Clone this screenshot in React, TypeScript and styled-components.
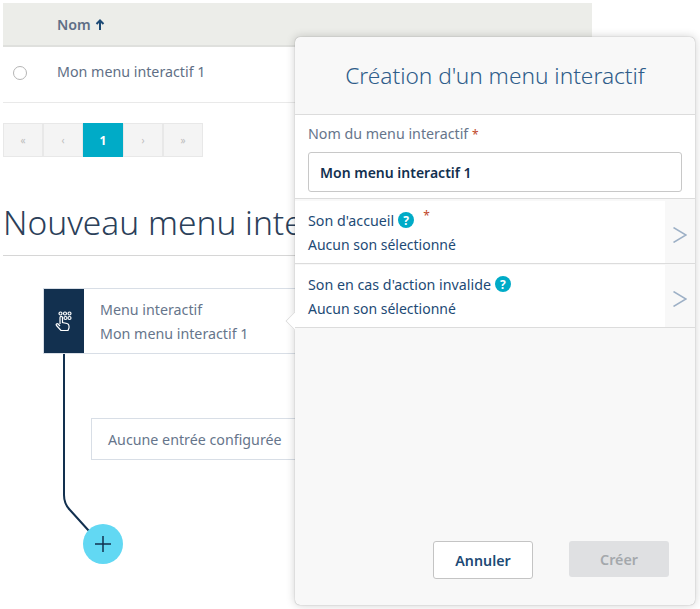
import React from "react";
import styled, { createGlobalStyle } from "styled-components";

const GlobalStyle = createGlobalStyle`
	html, body {
		margin: 0;
		padding: 0;
		background: #fff;
	}
	body {
		font-family: "Noto Sans", "Liberation Sans", sans-serif;
		font-size: 14.25px;
		color: #5f6f86;
	}
`;

const pages = [
	{ label: "«" },
	{ label: "‹" },
	{ label: "1", active: true },
	{ label: "›" },
	{ label: "»" },
];

const HandIcon = () => (
	<svg width="18" height="20" viewBox="0 0 18 20" fill="none" stroke="#fff" strokeWidth="1.200">
		<circle cx="5.500" cy="2.500" r="1.500" />
		<circle cx="10" cy="2.500" r="1.500" />
		<circle cx="14.500" cy="2.500" r="1.500" />
		<circle cx="10.500" cy="7" r="1.500" />
		<circle cx="14.500" cy="7" r="1.500" />
		<path d="M5 13V6.500c0-1.500 2.500-1.500 2.500 0V11.500l4.500 1c1.500.4 2 1.200 2 2.500v2l-1 2.500H6L1.500 14.500c-.9-1.200.5-2.400 1.600-1.500L5 15" />
	</svg>
);

const Chevron = () => (
	<svg width="14" height="16" viewBox="0 0 14 16" fill="none" stroke="#9db0c6" strokeWidth="1.500">
		<path d="M.5 .5L13 8 .5 15.500" />
	</svg>
);

const Help = () => <HelpBadge>?</HelpBadge>;

const App: React.FC = () => {
	return (
		<Page>
			<GlobalStyle />
			<Table>
				<TableHead>
					<NameHead>Nom</NameHead>
					<SortArrow width="10" height="11" viewBox="0 0 10 11" fill="none" stroke="#1d4a75" strokeWidth="2">
						<path d="M5 11V2M1.500 5L5 1.500 8.500 5" />
					</SortArrow>
				</TableHead>
				<TableRow>
					<Radio />
					<span>Mon menu interactif 1</span>
				</TableRow>
			</Table>
			<Pagination>
				{pages.map((p, i) => (
					<PageItem key={i} $active={p.active}>
						{p.label}
					</PageItem>
				))}
			</Pagination>
			<Title>Nouveau menu interactif</Title>
			<Diagram>
				<Connector width="60" height="180" viewBox="0 0 60 180" fill="none" stroke="#12304f" strokeWidth="2">
					<path d="M1 0V141c0 7 2 11 6 15L26 177" />
				</Connector>
				<Node>
					<NodeIcon>
						<HandIcon />
					</NodeIcon>
					<NodeText>
						<div>Menu interactif</div>
						<div>Mon menu interactif 1</div>
					</NodeText>
				</Node>
				<EmptyEntry>Aucune entrée configurée</EmptyEntry>
				<AddButton>
					<svg width="16" height="16" viewBox="0 0 16 16" stroke="#12304f" strokeWidth="1.500">
						<path d="M0 8h16M8 0v16" />
					</svg>
				</AddButton>
			</Diagram>
			<Panel>
				<Caret />
				<PanelHeader>Création d'un menu interactif</PanelHeader>
				<NameSection>
					<FieldLabel>
						Nom du menu interactif <Star>*</Star>
					</FieldLabel>
					<NameInput>Mon menu interactif 1</NameInput>
				</NameSection>
				<SoundList>
					<SoundRow>
						<SoundBody>
							<SoundTitle>
								Son d'accueil <Help /> <RaisedStar>*</RaisedStar>
							</SoundTitle>
							<SoundValue>Aucun son sélectionné</SoundValue>
						</SoundBody>
						<ChevronCell>
							<Chevron />
						</ChevronCell>
					</SoundRow>
					<SoundRow>
						<SoundBody>
							<SoundTitle>
								Son en cas d'action invalide <Help />
							</SoundTitle>
							<SoundValue>Aucun son sélectionné</SoundValue>
						</SoundBody>
						<ChevronCell>
							<Chevron />
						</ChevronCell>
					</SoundRow>
				</SoundList>
				<PanelFooter>
					<CancelButton>Annuler</CancelButton>
					<CreateButton>Créer</CreateButton>
				</PanelFooter>
			</Panel>
		</Page>
	);
};

export default App;

const Page = styled.div`
	position: relative;
	width: 700px;
	height: 609px;
	overflow: hidden;
	padding: 3px 0 0 3px;
	box-sizing: border-box;
`;
const Table = styled.div`
	width: 589px;
`;
const TableHead = styled.div`
	display: flex;
	align-items: center;
	height: 42px;
	padding-left: 54px;
	background: #ecede9;
	border-bottom: 2px solid #dfe0dd;
`;
const NameHead = styled.span`
	font-weight: 600;
	color: #5f6f86;
`;
const SortArrow = styled.svg`
	margin-left: 4px;
`;
const TableRow = styled.div`
	display: flex;
	align-items: center;
	height: 56px;
	padding-bottom: 6px;
	border-bottom: 1px solid #e9e9e9;
	box-sizing: border-box;
`;
const Radio = styled.span`
	width: 12px;
	height: 12px;
	margin: 3px 30px 0 10px;
	border: 1px solid #b5b5b5;
	border-radius: 50%;
`;
const Pagination = styled.div`
	display: flex;
	height: 34px;
	margin-top: 20px;
`;
const PageItem = styled.div<{ $active?: boolean }>`
	display: flex;
	flex: 0 0 40px;
	align-items: center;
	justify-content: center;
	font-size: ${(props) => (props.$active ? "12px" : "10px")};
	font-weight: ${(props) => (props.$active ? 700 : 400)};
	color: ${(props) => (props.$active ? "#fff" : "#bdbdbd")};
	background: ${(props) => (props.$active ? "#00abc7" : "#f4f4f4")};
	border: ${(props) => (props.$active ? "none" : "1px solid #e8e8e8")};
	box-sizing: border-box;
`;
const Title = styled.h1`
	margin: 45px 0 0;
	height: 54px;
	width: 400px;
	font-size: 33.5px;
	font-weight: 300;
	line-height: 41px;
	color: #2b4059;
	white-space: nowrap;
	border-bottom: 1px solid #d6d6d6;
	box-sizing: border-box;
`;
const Diagram = styled.div`
	position: relative;
	padding: 32px 0 0 40px;
`;
const Connector = styled.svg`
	position: absolute;
	left: 60px;
	top: 98px;
`;
const Node = styled.div`
	display: flex;
	width: 300px;
	height: 66px;
	background: #fff;
	border: 1px solid #d8dee6;
	box-sizing: border-box;
`;
const NodeIcon = styled.div`
	display: flex;
	align-items: center;
	justify-content: center;
	width: 40px;
	background: #12304f;
`;
const NodeText = styled.div`
	display: flex;
	flex-direction: column;
	justify-content: center;
	gap: 5px;
	padding-left: 16px;
	color: #66758b;
`;
const EmptyEntry = styled.div`
	position: relative;
	display: flex;
	align-items: center;
	width: 300px;
	height: 42px;
	margin: 64px 0 0 48px;
	padding-left: 16px;
	background: #fff;
	border: 1px solid #d8dee6;
	box-sizing: border-box;
	color: #66758b;
`;
const AddButton = styled.div`
	position: relative;
	display: flex;
	align-items: center;
	justify-content: center;
	width: 40px;
	height: 40px;
	margin: 64px 0 0 40px;
	background: #62d8f3;
	border-radius: 50%;
`;
const Panel = styled.div`
	position: absolute;
	left: 295px;
	top: 37px;
	display: flex;
	flex-direction: column;
	width: 400px;
	height: 568px;
	background: #f8f8f8;
	border-radius: 5px;
	box-shadow: 0 0 1px rgba(0, 0, 0, 0.4), 0 0 10px rgba(0, 0, 0, 0.2);
	color: #1d4a75;
`;
const Caret = styled.div`
	position: absolute;
	left: -7px;
	top: 277px;
	width: 14px;
	height: 14px;
	background: #fff;
	border-left: 1px solid #dddddd;
	border-bottom: 1px solid #dddddd;
	box-sizing: border-box;
	clip-path: polygon(0 0, 0 100%, 100% 100%);
	transform: rotate(45deg);
`;
const PanelHeader = styled.div`
	height: 78px;
	line-height: 78px;
	text-align: center;
	font-size: 22.7px;
	font-weight: 300;
	color: #2f5d8a;
	border-bottom: 1px solid #dcdcdc;
	box-sizing: border-box;
`;
const NameSection = styled.div`
	height: 84px;
	padding: 9px 13px 0;
	background: #fff;
	border-bottom: 1px solid #dcdcdc;
	box-sizing: border-box;
`;
const FieldLabel = styled.div`
	height: 28px;
	color: #66758b;
`;
const Star = styled.span`
	font-size: 12px;
	color: #c0472a;
`;
const RaisedStar = styled(Star)`
	position: relative;
	top: -5px;
	margin-left: 5px;
`;
const NameInput = styled.div`
	display: flex;
	align-items: center;
	height: 40px;
	padding-left: 11px;
	font-size: 14px;
	font-weight: 600;
	color: #12304f;
	border: 1px solid #c8c8c8;
	border-radius: 3px;
	box-sizing: border-box;
`;
const SoundList = styled.div`
	display: flex;
	flex-direction: column;
	gap: 1px;
	padding-top: 2px;
`;
const SoundRow = styled.div`
	display: flex;
	height: 63px;
	border-bottom: 1px solid #dcdcdc;
	box-sizing: border-box;
`;
const SoundBody = styled.div`
	flex: 1;
	display: flex;
	flex-direction: column;
	justify-content: center;
	gap: 5px;
	padding-left: 13px;
	background: #fff;
	line-height: 19px;
`;
const SoundTitle = styled.div`
	display: flex;
	align-items: center;
	gap: 4px;
`;
const SoundValue = styled.div`
	font-size: 14px;
`;
const HelpBadge = styled.span`
	display: inline-flex;
	align-items: center;
	justify-content: center;
	width: 16px;
	height: 16px;
	font-size: 12px;
	font-weight: 700;
	color: #fff;
	background: #00abc7;
	border-radius: 50%;
`;
const ChevronCell = styled.div`
	display: flex;
	align-items: center;
	width: 30px;
	padding: 5px 0 0 8px;
	box-sizing: border-box;
`;
const PanelFooter = styled.div`
	display: flex;
	align-items: flex-start;
	justify-content: flex-end;
	gap: 36px;
	margin-top: auto;
	padding: 0 26px 26px 0;
`;
const CancelButton = styled.div`
	display: flex;
	align-items: center;
	justify-content: center;
	width: 100px;
	height: 38px;
	font-weight: 600;
	color: #1d4a75;
	background: #fff;
	border: 1px solid #c4c4c4;
	border-radius: 3px;
	box-sizing: border-box;
`;
const CreateButton = styled(CancelButton)`
	height: 36px;
	color: #a4a8ac;
	background: #dfe0e2;
	border: none;
`;
